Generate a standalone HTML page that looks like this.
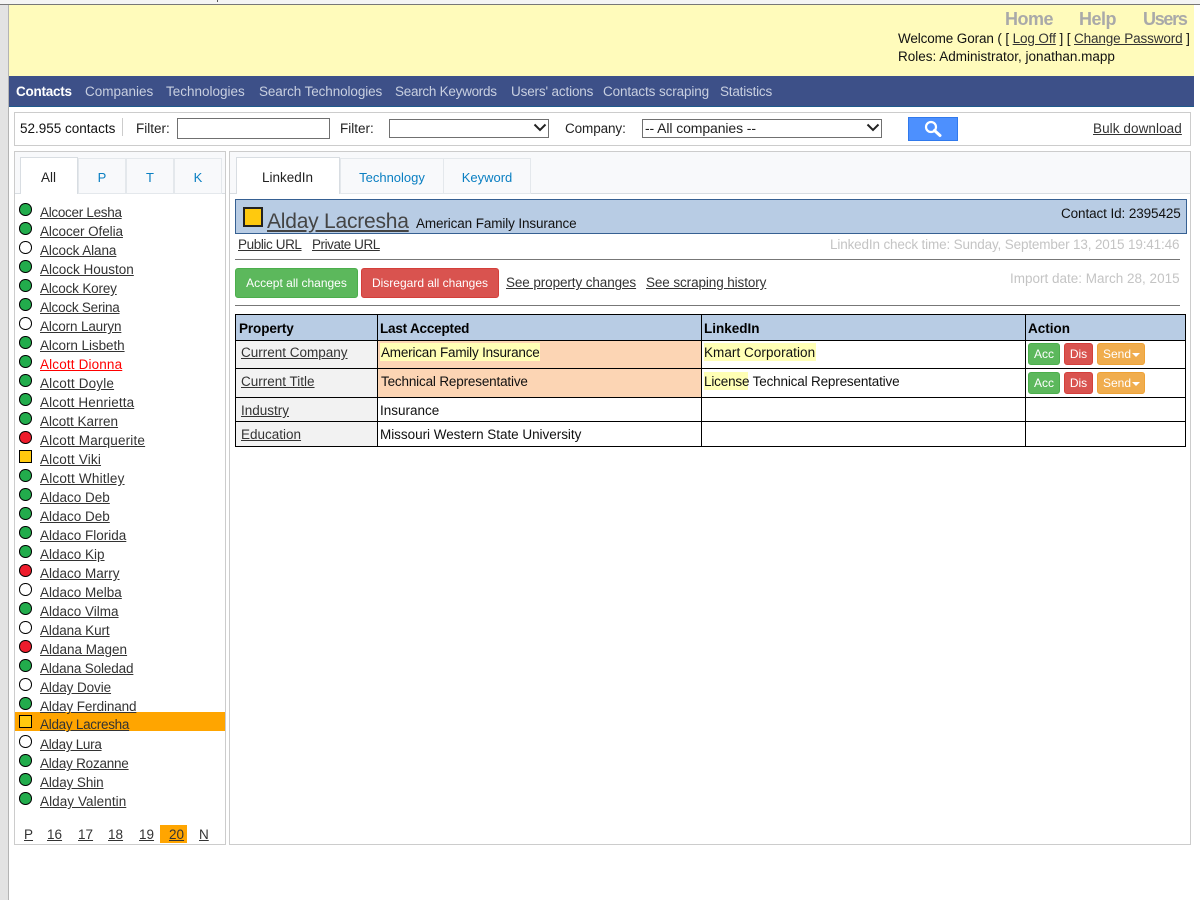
<!DOCTYPE html>
<html><head><meta charset="utf-8"><title>Contacts</title>
<style>
html,body{margin:0;padding:0;background:#fff;width:1200px;height:900px;overflow:hidden}
body{position:relative;font-family:"Liberation Sans",sans-serif;font-size:13.5px;color:#222}
.a{position:absolute;white-space:nowrap}
.b{position:absolute;box-sizing:border-box}
a{color:#333;text-decoration:underline}
.n{position:absolute;left:40px;white-space:nowrap;line-height:18px;height:18px;margin-top:1px}
.d{position:absolute;left:19px;width:10.5px;height:10.5px;border:1px solid #000;border-radius:50%;box-sizing:content-box;margin-top:1px}
.g{background:#22ac4c}.w{background:#fff}.r{background:#ee1c2c}
.s{position:absolute;left:19px;width:11px;height:11px;border:1px solid #000;background:#ffc90e}
.nav{position:absolute;top:84px;color:#c8cfe0;font-size:13.5px;line-height:16px;white-space:nowrap}
.btn{position:absolute;box-sizing:border-box;border-radius:3px;color:#fff;text-align:center;white-space:nowrap;font-size:12px}
.gb{background:#5cb85c;border:1px solid #4cae4c}.rb{background:#d9534f;border:1px solid #d43f3a}.ob{background:#f0ad4e;border:1px solid #eea236}
.t{position:absolute;line-height:18px;white-space:nowrap;margin-top:1px}
.h{font-weight:bold;color:#000}
.tab{position:absolute;box-sizing:border-box;top:158px;height:36px;border:1px solid #e4e8ec;text-align:center;line-height:38px;color:#0a7fc2;font-size:13px}
</style></head><body>
<!-- chrome -->
<div class="b" style="left:0;top:0;width:1200px;height:4px;background:#f4f4f4"></div>
<div class="b" style="left:0;top:4px;width:1200px;height:1px;background:#777"></div>
<div class="b" style="left:0;top:5px;width:8px;height:895px;background:#e3e3e3"></div>
<div class="b" style="left:8px;top:5px;width:1px;height:895px;background:#b4b4b4"></div>
<div class="b" style="left:217px;top:0;width:1px;height:2px;background:#555"></div>
<!-- header -->
<div class="b" style="left:9px;top:5px;width:1185px;height:71px;background:#fffbbb"></div>
<div class="a" style="left:1005px;top:9px;font-size:18px;font-weight:bold;color:#a9a9a9;line-height:20px;letter-spacing:-.5px">Home</div>
<div class="a" style="left:1079px;top:9px;font-size:18px;font-weight:bold;color:#a9a9a9;line-height:20px;letter-spacing:-.5px">Help</div>
<div class="a" style="left:1143px;top:9px;font-size:18px;font-weight:bold;color:#a9a9a9;line-height:20px;letter-spacing:-1.3px">Users</div>
<div class="a" style="left:898px;top:30px;line-height:18px;color:#111;letter-spacing:-.12px">Welcome Goran ( [ <a href="#">Log Off</a> ] [ <a href="#">Change Password</a> ]</div>
<div class="a" style="left:898px;top:48px;line-height:18px;color:#111">Roles: Administrator, jonathan.mapp</div>
<!-- nav -->
<div class="b" style="left:9px;top:76px;width:1185px;height:31px;background:#3d5088;border-bottom:1px solid #1f5a8c"></div>
<div class="nav" style="left:16px;color:#fff;font-weight:bold;letter-spacing:-.25px">Contacts</div>
<div class="nav" style="left:85px">Companies</div>
<div class="nav" style="left:166px">Technologies</div>
<div class="nav" style="left:259px;letter-spacing:-.1px">Search Technologies</div>
<div class="nav" style="left:395px;letter-spacing:-.27px">Search Keywords</div>
<div class="nav" style="left:511px;letter-spacing:-.15px">Users' actions</div>
<div class="nav" style="left:603px;letter-spacing:-.12px">Contacts scraping</div>
<div class="nav" style="left:720px;letter-spacing:-.2px">Statistics</div>
<!-- toolbar -->
<div class="b" style="left:14px;top:112px;width:1177px;height:34px;border:1px solid #ccc;background:#fff"></div>
<div class="a" style="left:20px;top:120px;line-height:18px;color:#111">52.955 contacts</div>
<div class="b" style="left:122px;top:118px;width:1px;height:18px;background:#ccc"></div>
<div class="a" style="left:136px;top:120px;line-height:18px">Filter:</div>
<div class="b" style="left:177px;top:118px;width:153px;height:21px;border:1px solid #707070;background:#fff"></div>
<div class="a" style="left:340px;top:120px;line-height:18px">Filter:</div>
<div class="b" style="left:389px;top:119px;width:160px;height:19px;border:1px solid #707070;background:#fff"></div>
<svg class="a" style="left:533px;top:123px" width="14" height="10" viewBox="0 0 14 10"><path d="M1.5 1.5L7 7l5.500-5.500" fill="none" stroke="#222" stroke-width="2"/></svg>
<div class="a" style="left:565px;top:120px;line-height:18px;letter-spacing:-.1px">Company:</div>
<div class="b" style="left:642px;top:119px;width:240px;height:19px;border:1px solid #707070;background:#fff"></div>
<div class="a" style="left:645px;top:120px;line-height:17px;font-size:14px;color:#222;letter-spacing:-.1px">-- All companies --</div>
<svg class="a" style="left:866px;top:123px" width="14" height="10" viewBox="0 0 14 10"><path d="M1.5 1.500L7 7l5.500-5.500" fill="none" stroke="#222" stroke-width="2"/></svg>
<div class="b" style="left:908px;top:117px;width:50px;height:24px;background:#4d90fe;border:1px solid #3079ed"></div>
<svg class="a" style="left:923px;top:119px" width="20" height="19" viewBox="0 0 20 19"><circle cx="8" cy="8" r="5" fill="none" stroke="#fff" stroke-width="2.200"/><path d="M11.500 11.500L17 16.500" stroke="#fff" stroke-width="3" stroke-linecap="round"/></svg>
<a class="a" href="#" style="left:1093px;top:120px;line-height:18px;letter-spacing:.08px">Bulk download</a>
<!-- left panel -->
<div class="b" style="left:14px;top:151px;width:212px;height:694px;border:1px solid #ccc;background:#fff"></div>
<div class="b" style="left:15px;top:152px;width:210px;height:41px;background:#f8f9fb"></div>
<div class="b" style="left:15px;top:193px;width:210px;height:1px;background:#d8dde2"></div>
<div class="tab" style="left:78px;width:48px">P</div>
<div class="tab" style="left:126px;width:48px;color:#0a7fc2">T</div>
<div class="tab" style="left:174px;width:48px">K</div>
<div class="b" style="left:20px;top:157px;width:58px;height:37px;border:1px solid #d8dde2;border-bottom:none;background:#fff"></div>
<div class="a" style="left:41px;top:169px;line-height:18px;color:#222">All</div>
<div class="b" style="left:15px;top:712px;width:210px;height:19px;background:#ffa500"></div>
<div class="b" style="left:160px;top:825px;width:27px;height:18px;background:#ffa500"></div>
<div class="d g" style="top:202px"></div><div class="n" style="top:203px;letter-spacing:-.3px"><a href="#">Alcocer Lesha</a></div>
<div class="d g" style="top:221px"></div><div class="n" style="top:222px;letter-spacing:-.08px"><a href="#">Alcocer Ofelia</a></div>
<div class="d w" style="top:240px"></div><div class="n" style="top:241px;letter-spacing:-.08px"><a href="#">Alcock Alana</a></div>
<div class="d g" style="top:259px"></div><div class="n" style="top:260px"><a href="#">Alcock Houston</a></div>
<div class="d g" style="top:278px"></div><div class="n" style="top:279px;letter-spacing:-.17px"><a href="#">Alcock Korey</a></div>
<div class="d g" style="top:297px"></div><div class="n" style="top:298px;letter-spacing:-.23px"><a href="#">Alcock Serina</a></div>
<div class="d w" style="top:316px"></div><div class="n" style="top:317px;letter-spacing:-.15px"><a href="#">Alcorn Lauryn</a></div>
<div class="d g" style="top:335px"></div><div class="n" style="top:336px;letter-spacing:-.07px"><a href="#">Alcorn Lisbeth</a></div>
<div class="d g" style="top:354px"></div><div class="n" style="top:355px;letter-spacing:.15px"><a href="#" style="color:#f00">Alcott Dionna</a></div>
<div class="d g" style="top:373px"></div><div class="n" style="top:374px;letter-spacing:.17px"><a href="#">Alcott Doyle</a></div>
<div class="d g" style="top:392px"></div><div class="n" style="top:393px;letter-spacing:.12px"><a href="#">Alcott Henrietta</a></div>
<div class="d g" style="top:411px"></div><div class="n" style="top:412px"><a href="#">Alcott Karren</a></div>
<div class="d r" style="top:430px"></div><div class="n" style="top:431px;letter-spacing:.18px"><a href="#">Alcott Marquerite</a></div>
<div class="s" style="top:450px"></div><div class="n" style="top:450px;letter-spacing:.18px"><a href="#">Alcott Viki</a></div>
<div class="d g" style="top:468px"></div><div class="n" style="top:469px;letter-spacing:.2px"><a href="#">Alcott Whitley</a></div>
<div class="d g" style="top:487px"></div><div class="n" style="top:488px"><a href="#">Aldaco Deb</a></div>
<div class="d g" style="top:506px"></div><div class="n" style="top:507px"><a href="#">Aldaco Deb</a></div>
<div class="d g" style="top:525px"></div><div class="n" style="top:526px"><a href="#">Aldaco Florida</a></div>
<div class="d g" style="top:544px"></div><div class="n" style="top:545px"><a href="#">Aldaco Kip</a></div>
<div class="d r" style="top:563px"></div><div class="n" style="top:564px"><a href="#">Aldaco Marry</a></div>
<div class="d w" style="top:582px"></div><div class="n" style="top:583px"><a href="#">Aldaco Melba</a></div>
<div class="d g" style="top:601px"></div><div class="n" style="top:602px"><a href="#">Aldaco Vilma</a></div>
<div class="d w" style="top:620px"></div><div class="n" style="top:621px;letter-spacing:-.09px"><a href="#">Aldana Kurt</a></div>
<div class="d r" style="top:639px"></div><div class="n" style="top:640px"><a href="#">Aldana Magen</a></div>
<div class="d g" style="top:658px"></div><div class="n" style="top:659px;letter-spacing:-.14px"><a href="#">Aldana Soledad</a></div>
<div class="d w" style="top:677px"></div><div class="n" style="top:678px;letter-spacing:-.09px"><a href="#">Alday Dovie</a></div>
<div class="d g" style="top:696px"></div><div class="n" style="top:697px;letter-spacing:-.13px"><a href="#">Alday Ferdinand</a></div>
<div class="s" style="top:715px"></div><div class="n" style="top:715px;letter-spacing:-.28px"><a href="#">Alday Lacresha</a></div>
<div class="d w" style="top:734px"></div><div class="n" style="top:735px;letter-spacing:-.3px"><a href="#">Alday Lura</a></div>
<div class="d g" style="top:753px"></div><div class="n" style="top:754px;letter-spacing:-.23px"><a href="#">Alday Rozanne</a></div>
<div class="d g" style="top:772px"></div><div class="n" style="top:773px;letter-spacing:-.1px"><a href="#">Alday Shin</a></div>
<div class="d g" style="top:791px"></div><div class="n" style="top:792px;letter-spacing:.07px"><a href="#">Alday Valentin</a></div>
<a class="a" href="#" style="left:24px;top:826px;line-height:18px">P</a>
<a class="a" href="#" style="left:47px;top:826px;line-height:18px">16</a>
<a class="a" href="#" style="left:78px;top:826px;line-height:18px">17</a>
<a class="a" href="#" style="left:108px;top:826px;line-height:18px">18</a>
<a class="a" href="#" style="left:139px;top:826px;line-height:18px">19</a>
<a class="a" href="#" style="left:169px;top:826px;line-height:18px">20</a>
<a class="a" href="#" style="left:199px;top:826px;line-height:18px">N</a>
<!-- right panel -->
<div class="b" style="left:229px;top:151px;width:962px;height:694px;border:1px solid #ccc;background:#fff"></div>
<div class="b" style="left:230px;top:152px;width:960px;height:41px;background:#f8f9fb"></div>
<div class="b" style="left:230px;top:193px;width:960px;height:1px;background:#d8dde2"></div>
<div class="tab" style="left:340px;width:104px">Technology</div>
<div class="tab" style="left:443px;width:88px">Keyword</div>
<div class="b" style="left:236px;top:157px;width:104px;height:37px;border:1px solid #d8dde2;border-bottom:none;background:#fff"></div>
<div class="a" style="left:262px;top:169px;line-height:18px;color:#222">LinkedIn</div>
<div class="b" style="left:235px;top:199px;width:952px;height:35px;background:#b8cce4;border:1px solid #366092"></div>
<div class="b" style="left:243px;top:207px;width:20px;height:20px;border:2px solid #222;background:#ffc90e"></div>
<a class="a" href="#" style="left:267px;top:209px;font-size:21px;line-height:26px;color:#444;letter-spacing:-.22px">Alday Lacresha</a>
<div class="a" style="left:416px;top:215px;line-height:18px;color:#111;letter-spacing:-.12px">American Family Insurance</div>
<div class="a" style="left:1061px;top:205px;line-height:18px;color:#111;letter-spacing:-.1px">Contact Id: 2395425</div>
<a class="a" href="#" style="left:238px;top:236px;line-height:18px;letter-spacing:-.4px">Public URL</a>
<a class="a" href="#" style="left:312px;top:236px;line-height:18px;letter-spacing:-.45px">Private URL</a>
<div class="a" style="left:830px;top:236px;line-height:18px;color:#c4c4c4;letter-spacing:-.15px">LinkedIn check time: Sunday, September 13, 2015 19:41:46</div>
<div class="b" style="left:235px;top:259px;width:945px;height:1px;background:#777"></div>
<div class="btn gb" style="left:235px;top:268px;width:123px;height:30px;line-height:28px">Accept all changes</div>
<div class="btn rb" style="left:361px;top:268px;width:138px;height:30px;line-height:28px">Disregard all changes</div>
<a class="a" href="#" style="left:506px;top:274px;line-height:18px;letter-spacing:-.1px">See property changes</a>
<a class="a" href="#" style="left:646px;top:274px;line-height:18px;letter-spacing:-.1px">See scraping history</a>
<div class="a" style="left:1010px;top:270px;line-height:18px;color:#c4c4c4">Import date: March 28, 2015</div>
<div class="b" style="left:235px;top:305px;width:945px;height:1px;background:#777"></div>
<!-- table -->
<div class="b" style="left:235px;top:314px;width:951px;height:133px;border:1px solid #000;background:#fff"></div>
<div class="b" style="left:236px;top:315px;width:949px;height:25px;background:#b8cce4"></div>
<div class="b" style="left:236px;top:341px;width:141px;height:105px;background:#f2f2f2"></div>
<div class="b" style="left:378px;top:341px;width:323px;height:56px;background:#fcd5b4"></div>
<div class="b" style="left:380px;top:343px;width:160px;height:18px;background:#ffffb5"></div>
<div class="b" style="left:704px;top:343px;width:112px;height:18px;background:#ffffb5"></div>
<div class="b" style="left:704px;top:372px;width:44px;height:18px;background:#ffffb5"></div>
<div class="b" style="left:236px;top:340px;width:949px;height:1px;background:#000"></div>
<div class="b" style="left:236px;top:368px;width:949px;height:1px;background:#000"></div>
<div class="b" style="left:236px;top:397px;width:949px;height:1px;background:#000"></div>
<div class="b" style="left:236px;top:421px;width:949px;height:1px;background:#000"></div>
<div class="b" style="left:377px;top:315px;width:1px;height:131px;background:#000"></div>
<div class="b" style="left:701px;top:315px;width:1px;height:131px;background:#000"></div>
<div class="b" style="left:1025px;top:315px;width:1px;height:131px;background:#000"></div>
<div class="t h" style="left:239px;top:319px;letter-spacing:-.1px">Property</div>
<div class="t h" style="left:380px;top:319px;letter-spacing:-.2px">Last Accepted</div>
<div class="t h" style="left:704px;top:319px">LinkedIn</div>
<div class="t h" style="left:1028px;top:319px">Action</div>
<a class="t" href="#" style="left:241px;top:343px">Current Company</a>
<div class="t" style="left:381px;top:343px;color:#111;letter-spacing:-.2px">American Family Insurance</div>
<div class="t" style="left:704px;top:343px;color:#111;letter-spacing:.05px">Kmart Corporation</div>
<a class="t" href="#" style="left:241px;top:372px">Current Title</a>
<div class="t" style="left:381px;top:372px;color:#111;letter-spacing:-.17px">Technical Representative</div>
<div class="t" style="left:704px;top:372px;color:#111;letter-spacing:-.17px">License Technical Representative</div>
<a class="t" href="#" style="left:241px;top:401px">Industry</a>
<div class="t" style="left:380px;top:401px;color:#111">Insurance</div>
<a class="t" href="#" style="left:241px;top:425px">Education</a>
<div class="t" style="left:380px;top:425px;color:#111;letter-spacing:-.03px">Missouri Western State University</div>
<div class="btn gb" style="left:1028px;top:343px;width:32px;height:22px;line-height:20px">Acc</div>
<div class="btn rb" style="left:1064px;top:343px;width:29px;height:22px;line-height:20px">Dis</div>
<div class="btn ob" style="left:1097px;top:343px;width:48px;height:22px;line-height:20px;text-align:left;padding-left:5px">Send</div>
<div class="b" style="left:1132px;top:353px;width:0;height:0;border-left:4px solid transparent;border-right:4px solid transparent;border-top:4px solid #fff"></div>
<div class="btn gb" style="left:1028px;top:372px;width:32px;height:22px;line-height:20px">Acc</div>
<div class="btn rb" style="left:1064px;top:372px;width:29px;height:22px;line-height:20px">Dis</div>
<div class="btn ob" style="left:1097px;top:372px;width:48px;height:22px;line-height:20px;text-align:left;padding-left:5px">Send</div>
<div class="b" style="left:1132px;top:382px;width:0;height:0;border-left:4px solid transparent;border-right:4px solid transparent;border-top:4px solid #fff"></div>
</body></html>
